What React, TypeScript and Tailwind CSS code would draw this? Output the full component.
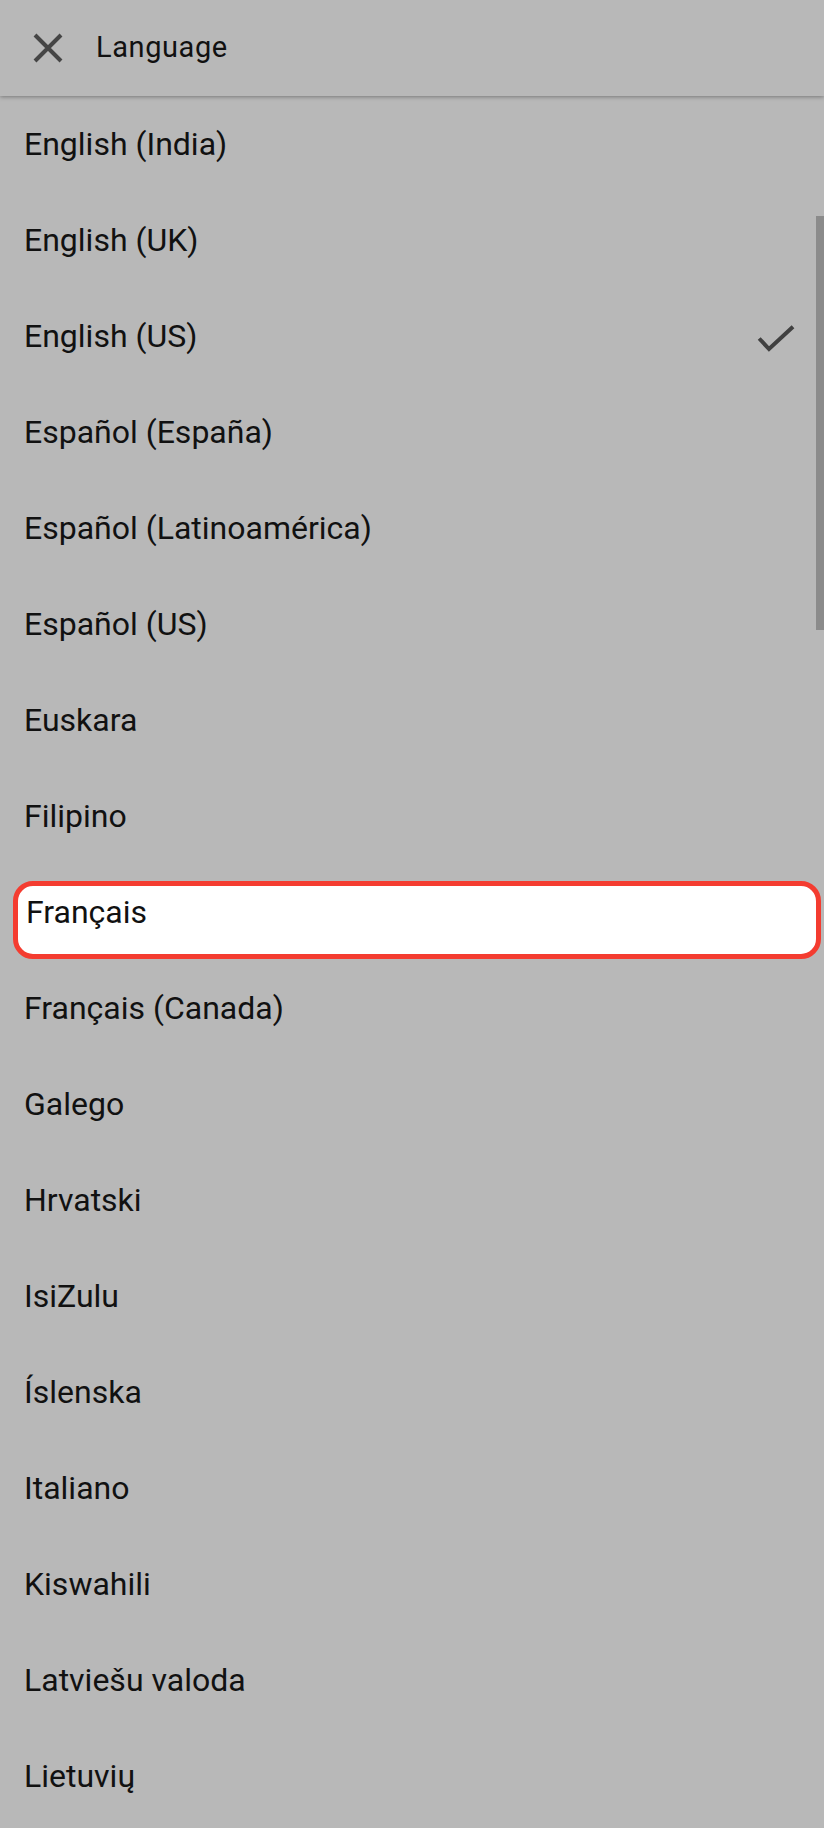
const languages = [
  'English (India)',
  'English (UK)',
  'English (US)',
  'Español (España)',
  'Español (Latinoamérica)',
  'Español (US)',
  'Euskara',
  'Filipino',
  'Français',
  'Français (Canada)',
  'Galego',
  'Hrvatski',
  'IsiZulu',
  'Íslenska',
  'Italiano',
  'Kiswahili',
  'Latviešu valoda',
  'Lietuvių',
]

const selected = 'English (US)'
const focused = 'Français'

function CloseIcon() {
  return (
    <svg width="48" height="48" viewBox="0 0 48 48" className="shrink-0">
      <path d="M11 11 37 37M37 11 11 37" stroke="#454545" strokeWidth="4" fill="none" />
    </svg>
  )
}

function CheckIcon() {
  return (
    <svg width="40" height="36" viewBox="0 0 40 36" className="shrink-0 overflow-visible">
      <polyline
        points="3.2,20.5 13,31 37,8.8"
        stroke="#404040"
        strokeWidth="4"
        fill="none"
        strokeLinejoin="miter"
      />
    </svg>
  )
}

export default function App() {
  return (
    <div
      className="relative h-[1828px] w-[824px] overflow-hidden bg-[#b8b8b8] text-[#111]"
      style={{ fontFamily: 'Roboto, "Noto Sans", sans-serif' }}
    >
      <header className="relative z-10 flex h-24 items-center gap-6 bg-[#b8b8b8] pl-6 shadow-[0_1px_4px_rgba(0,0,0,0.35)]">
        <CloseIcon />
        <span className="text-[29px] tracking-[0.02em]">Language</span>
      </header>

      <ul>
        {languages.map((name) => (
          <li key={name} className="relative flex h-24 items-center justify-between pl-6 pr-[28px]">
            {name === focused && (
              <div className="absolute top-[17px] right-[3px] bottom-px left-[13px] rounded-[20px] border-[5px] border-[#f43c30] bg-white" />
            )}
            <span className={`relative text-[32px] ${name === focused ? 'pl-[2px]' : ''}`}>{name}</span>
            {name === selected && <CheckIcon />}
          </li>
        ))}
      </ul>

      {/* scroll thumb */}
      <div className="absolute top-[216px] right-0 h-[414px] w-2 bg-[#8b8b8b]" />
    </div>
  )
}
